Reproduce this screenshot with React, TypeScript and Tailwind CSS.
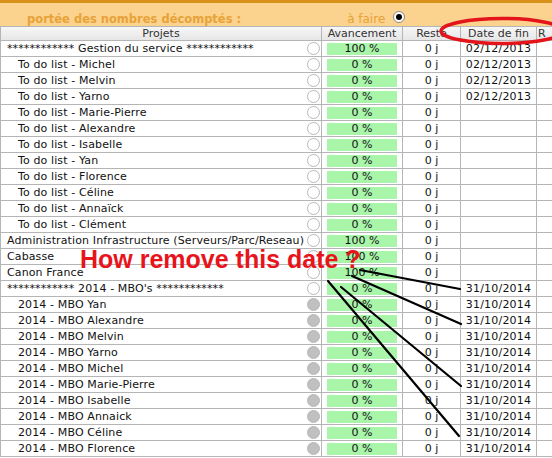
import React from "react";

type Row = {
  label: string;
  indent?: boolean;
  pct: string;
  date?: string;
  filled?: boolean;
};

const todo = ["Michel", "Melvin", "Yarno", "Marie-Pierre", "Alexandre", "Isabelle", "Yan", "Florence", "Céline", "Annaïck", "Clément"];
const mbo = ["Yan", "Alexandre", "Melvin", "Yarno", "Michel", "Marie-Pierre", "Isabelle", "Annaick", "Céline", "Florence"];

const rows: Row[] = [
  { label: "************ Gestion du service ************", pct: "100 %", date: "02/12/2013" },
  ...todo.map((n, i) => ({
    label: `To do list - ${n}`,
    indent: true,
    pct: "0 %",
    date: i < 3 ? "02/12/2013" : undefined,
  })),
  { label: "Administration Infrastructure (Serveurs/Parc/Reseau)", pct: "100 %" },
  { label: "Cabasse", pct: "100 %" },
  { label: "Canon France", pct: "100 %" },
  { label: "************ 2014 - MBO's ************", pct: "0 %", date: "31/10/2014" },
  ...mbo.map((n) => ({
    label: `2014 - MBO ${n}`,
    indent: true,
    pct: "0 %",
    date: "31/10/2014",
    filled: true,
  })),
];

export default function App() {
  return (
    <div className="relative h-[458px] w-[552px] overflow-hidden bg-white text-[11px] text-[#111] [font-family:'DejaVu_Sans',Verdana,sans-serif]">
      {/* top band */}
      <div className="h-[3px] bg-[#d9911c]" />
      <div className="flex h-[23px] items-end bg-[#fbd38e]">
        <span className="ml-[27px] text-[11.5px] font-bold leading-[14px] text-[#e8a238]">portée des nombres décomptés :</span>
        <span className="ml-[106px] text-[12px] leading-[14px] text-[#e8a238]">à faire</span>
        <span className="ml-[8px] mb-[3px] flex h-[12px] w-[12px] items-center justify-center rounded-full border border-[#888] bg-white">
          <span className="h-[6px] w-[6px] rounded-full bg-black" />
        </span>
      </div>

      {/* table header */}
      <div className="flex h-[15px] border-y border-[#b5b5b5] bg-gradient-to-b from-[#f7f7f7] to-[#e6e6e6] leading-[13px] text-[#333]">
        <div className="w-[322px] border-r border-l border-[#b5b5b5] text-center">Projets</div>
        <div className="w-[81px] border-r border-[#b5b5b5] text-center">Avancement</div>
        <div className="w-[58px] border-r border-[#b5b5b5] text-center">Reste</div>
        <div className="w-[76px] border-r border-[#b5b5b5] text-center">Date de fin</div>
        <div className="flex-1 pl-[1px]">R</div>
      </div>

      {/* rows */}
      {rows.map((r, i) => (
        <div key={i} className="flex h-[16px] border-b border-[#b5b5b5] leading-[15px]">
          <div className="flex w-[322px] items-center border-r border-l border-[#b5b5b5]">
            <span className={`flex-1 whitespace-nowrap tracking-[0.12px] ${r.indent ? "pl-[17px]" : "pl-[6px]"}`}>{r.label}</span>
            <span
              className={`mr-[1px] h-[13px] w-[13px] shrink-0 rounded-full border ${
                r.filled ? "border-[#b8b8b8] bg-[#c0c0c0]" : "border-[#b8b8b8] bg-white"
              }`}
            />
          </div>
          <div className="flex w-[81px] items-center border-r border-[#b5b5b5] px-[5px]">
            <div className="h-[12px] w-full bg-[#a9f5a9] text-center leading-[12px]">{r.pct}</div>
          </div>
          <div className="w-[58px] border-r border-[#b5b5b5] text-center">0 j</div>
          <div className="w-[76px] border-r border-[#b5b5b5] text-center tracking-[0.2px]">{r.date ?? ""}</div>
          <div className="flex-1" />
        </div>
      ))}

      {/* annotations */}
      <svg className="pointer-events-none absolute inset-0" width="552" height="458" viewBox="0 0 552 458">
        <ellipse cx="502" cy="31" rx="61" ry="12.5" fill="none" stroke="#e3141a" strokeWidth="3.5" />
        <g stroke="#000" strokeWidth="2.2" strokeLinecap="round">
          <line x1="360" y1="270" x2="460" y2="289" />
          <line x1="352" y1="276" x2="461" y2="324" />
          <line x1="341" y1="287" x2="461" y2="386" />
          <line x1="328" y1="281" x2="459" y2="436" />
        </g>
      </svg>
      <div className="absolute left-[80px] top-[247px] text-[25px] font-bold leading-[25px] text-[#e8141c] [font-family:'Liberation_Sans',Arial,sans-serif]">
        How remove this date ?
      </div>
    </div>
  );
}
